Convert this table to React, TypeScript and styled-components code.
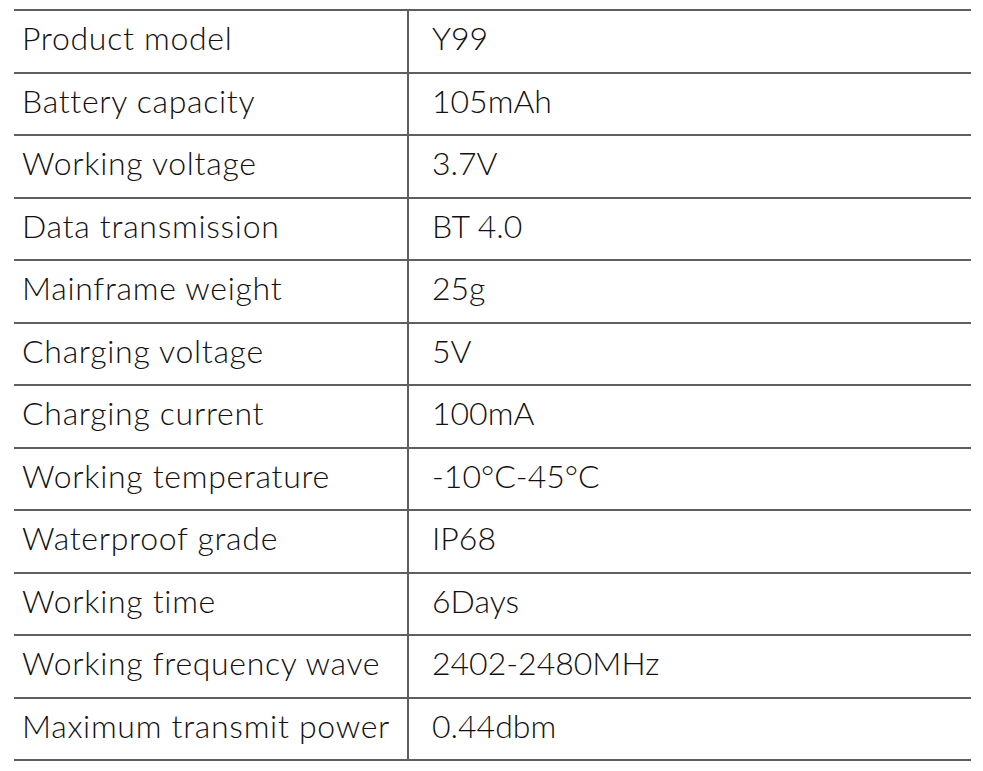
import styled, { createGlobalStyle } from "styled-components";

const GlobalStyle = createGlobalStyle`
  html, body {
    margin: 0;
    padding: 0;
    background: #ffffff;
  }
`;

const Page = styled.div`
  padding: 9px 12px 0 14px;
  font-family: Lato, "Open Sans", sans-serif;
  font-weight: 300;
  color: #111111;
`;

const Table = styled.div`
  width: 957px;
  border-bottom: 2px solid #5f5f5f;
`;

const Row = styled.div`
  display: grid;
  grid-template-columns: 395px 1fr;
  height: 62.5px;
  box-sizing: border-box;
  border-top: 2px solid #5f5f5f;
`;

const Cell = styled.div<{ first?: boolean }>`
  display: flex;
  align-items: center;
  padding: 0 0 7px ${(p) => (p.first ? "8px" : "23px")};
  font-size: 32px;
  letter-spacing: ${(p) => (p.first ? "0.7px" : "0")};
  white-space: nowrap;
  border-right: ${(p) => (p.first ? "2px solid #5f5f5f" : "none")};
`;

const specs: [string, string][] = [
  ["Product model", "Y99"],
  ["Battery capacity", "105mAh"],
  ["Working voltage", "3.7V"],
  ["Data transmission", "BT 4.0"],
  ["Mainframe weight", "25g"],
  ["Charging voltage", "5V"],
  ["Charging current", "100mA"],
  ["Working temperature", "-10°C-45°C"],
  ["Waterproof grade", "IP68"],
  ["Working time", "6Days"],
  ["Working frequency wave", "2402-2480MHz"],
  ["Maximum transmit power", "0.44dbm"],
];

export default function App() {
  return (
    <Page>
      <GlobalStyle />
      <Table>
        {specs.map(([label, value]) => (
          <Row key={label}>
            <Cell first>{label}</Cell>
            <Cell>{value}</Cell>
          </Row>
        ))}
      </Table>
    </Page>
  );
}
